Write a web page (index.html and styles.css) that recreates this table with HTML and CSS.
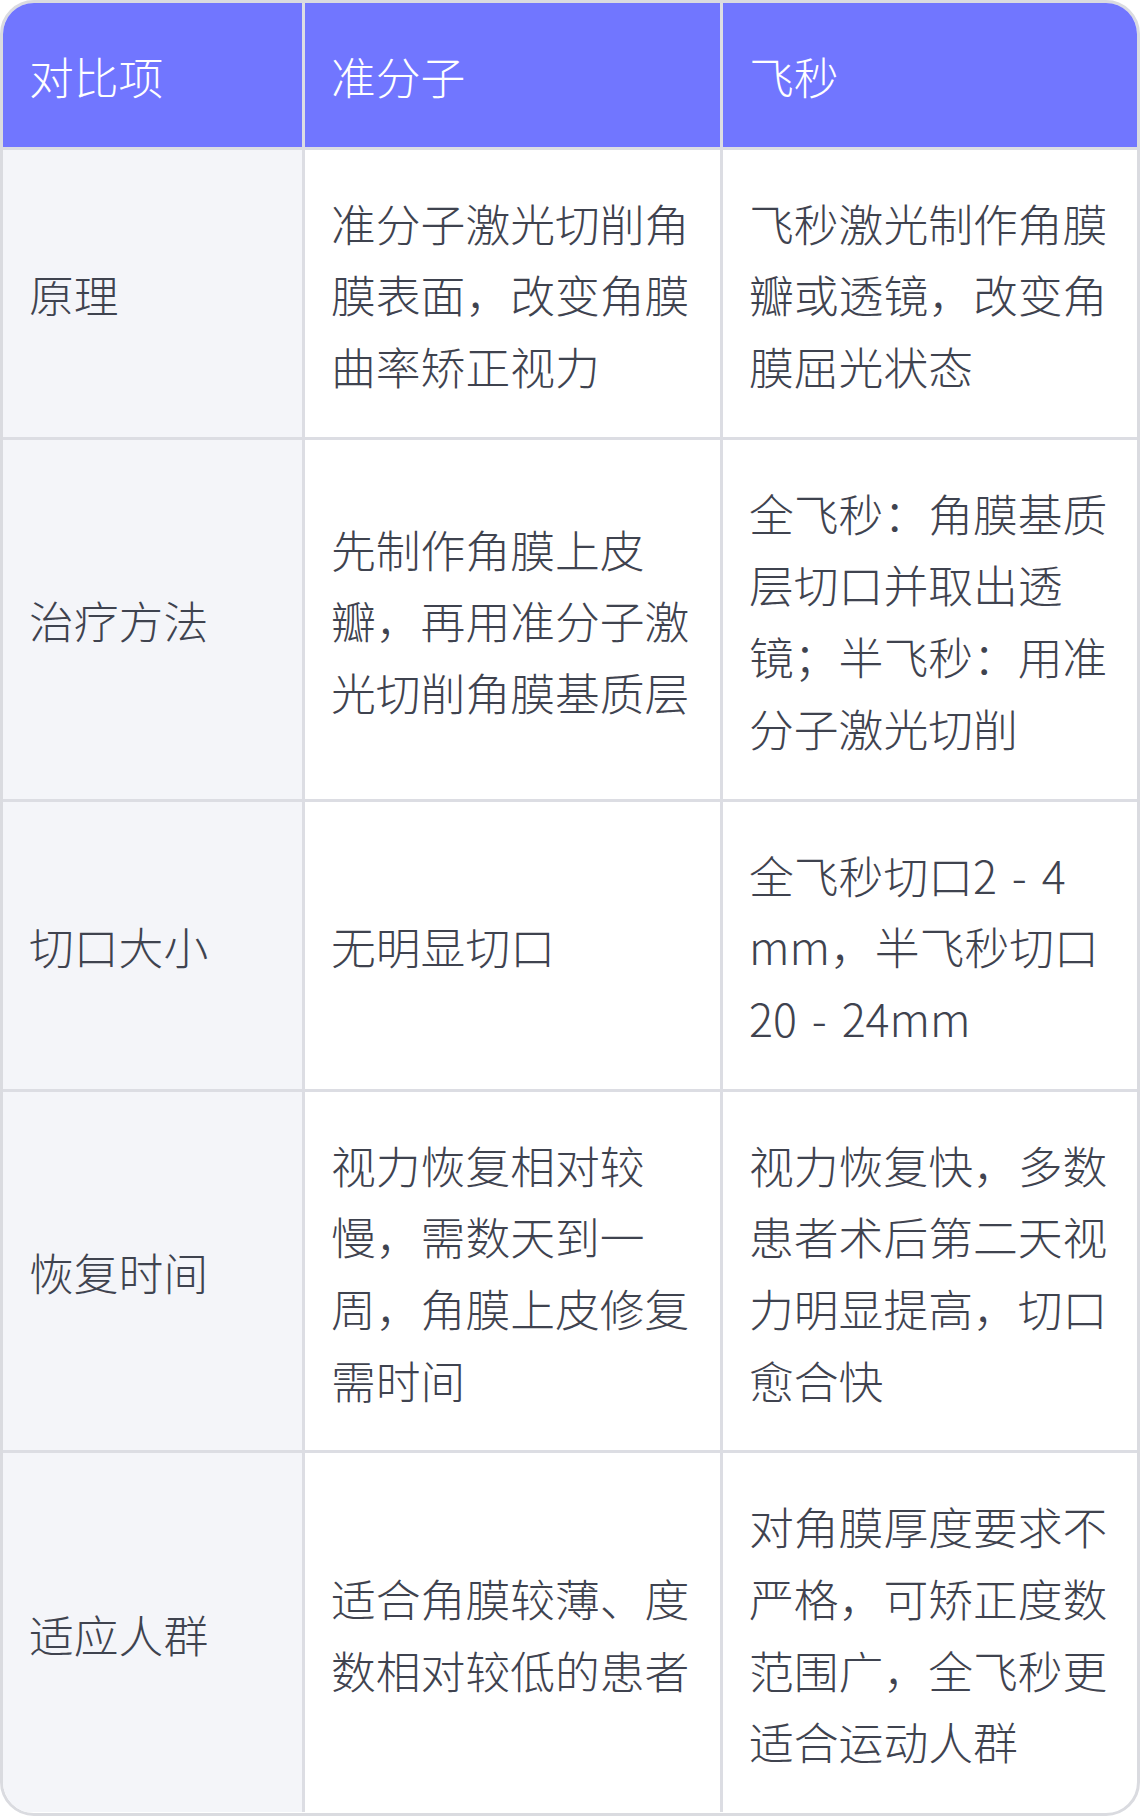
FILE: index.html
```html
<!DOCTYPE html>
<html lang="zh-CN">
<head>
<meta charset="utf-8">
<title>准分子 vs 飞秒</title>
<link rel="stylesheet" href="styles.css">
</head>
<body>
<div class="card">
  <table class="compare">
    <colgroup>
      <col class="c-label">
      <col class="c-a">
      <col class="c-b">
    </colgroup>
    <thead>
      <tr>
        <th>对比项</th>
        <th>准分子</th>
        <th>飞秒</th>
      </tr>
    </thead>
    <tbody>
      <tr>
        <td class="label">原理</td>
        <td>准分子激光切削角膜表面，改变角膜曲率矫正视力</td>
        <td>飞秒激光制作角膜瓣或透镜，改变角膜屈光状态</td>
      </tr>
      <tr>
        <td class="label">治疗方法</td>
        <td>先制作角膜上皮瓣，再用准分子激光切削角膜基质层</td>
        <td>全飞秒：角膜基质层切口并取出透镜；半飞秒：用准分子激光切削</td>
      </tr>
      <tr>
        <td class="label">切口大小</td>
        <td>无明显切口</td>
        <td>全飞秒切口2 - 4 mm，半飞秒切口20 - 24mm</td>
      </tr>
      <tr>
        <td class="label">恢复时间</td>
        <td>视力恢复相对较慢，需数天到一周，角膜上皮修复需时间</td>
        <td>视力恢复快，多数患者术后第二天视力明显提高，切口愈合快</td>
      </tr>
      <tr>
        <td class="label">适应人群</td>
        <td>适合角膜较薄、度数相对较低的患者</td>
        <td>对角膜厚度要求不严格，可矫正度数范围广，全飞秒更适合运动人群</td>
      </tr>
    </tbody>
  </table>
</div>
</body>
</html>
```

FILE: styles.css
```css
html, body {
  margin: 0;
  padding: 0;
  background: #ffffff;
}

body {
  font-family: "Noto Sans CJK SC", "Noto Sans", sans-serif;
  font-weight: 300;
  color: #3f434f;
}

.card {
  width: 1140px;
  height: 1816px;
  box-sizing: border-box;
  border: 3px solid #dadbe0;
  border-radius: 34px;
  overflow: hidden;
  background: #ffffff;
}

.compare {
  width: 1134px;
  border-collapse: separate;
  border-spacing: 0;
  table-layout: fixed;
}

.c-label { width: 302px; }
.c-a { width: 418px; }
.c-b { width: 414px; }

.compare th,
.compare td {
  font-size: 44.8px;
  line-height: 71.68px;
  padding: 37px 22px 35px 26px;
  text-align: left;
  vertical-align: middle;
  border-right: 3px solid #dcdde3;
  border-bottom: 3px solid #dcdde3;
  word-spacing: 5px;
}

.compare th:last-child,
.compare td:last-child {
  border-right: none;
}

.compare tbody tr:last-child td {
  border-bottom: none;
}

.compare th {
  background: #7176ff;
  color: #ffffff;
  font-weight: 300;
}

.compare td.label {
  background: #f4f5f9;
}
```
